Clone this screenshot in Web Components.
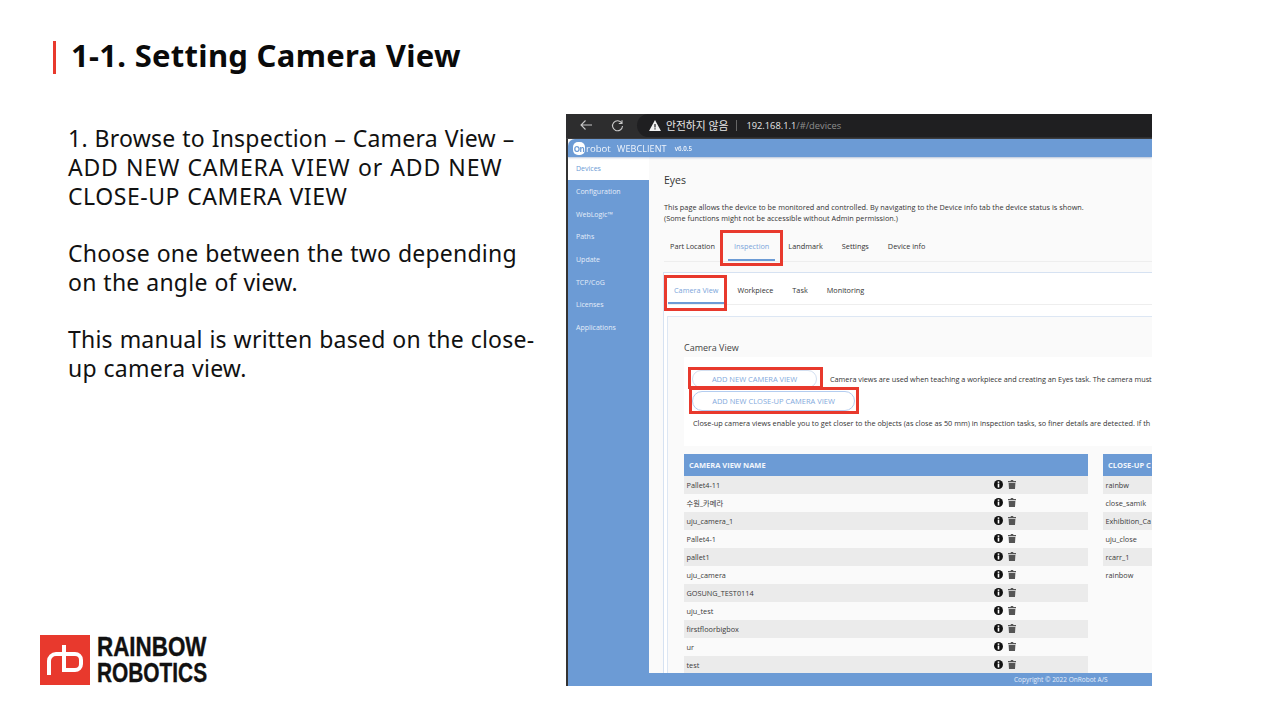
<!DOCTYPE html>
<html lang="en">
<head>
<meta charset="utf-8">
<title>1-1. Setting Camera View</title>
<style>
  html, body { margin: 0; padding: 0; background: #fff; }
</style>
</head>
<body>
<deck-slide>
  <slide-title slot="title">1-1. Setting Camera View</slide-title>
  <slide-notes slot="notes">
    <p>1. Browse to Inspection – Camera View –<br><span style="letter-spacing:.8px">ADD NEW CAMERA VIEW or ADD NEW</span><br><span style="letter-spacing:.55px">CLOSE-UP CAMERA VIEW</span></p>
    <p>Choose one between the two depending<br>on the angle of view.</p>
    <p>This manual is written based on the close-<br>up camera view.</p>
  </slide-notes>
  <rb-logo slot="logo"></rb-logo>
  <web-shot slot="shot"></web-shot>
</deck-slide>

<script>
const uiFont = '"Open Sans", "Noto Sans", "Noto Sans CJK KR", sans-serif';

class DeckSlide extends HTMLElement {
  constructor() {
    super();
    this.attachShadow({mode: 'open'});
    this.shadowRoot.innerHTML = `
      <style>
        :host { display: grid; grid-template-rows: 114px 572px; grid-template-columns: 526px 586px;
          width: 1280px; height: 720px; padding-left: 40px; box-sizing: border-box; overflow: hidden; }
        .head { grid-column: 1 / 3; padding: 41px 0 0 13px; }
        .left { display: flex; flex-direction: column; justify-content: space-between; padding-bottom: 1px; }
      </style>
      <div class="head"><slot name="title"></slot></div>
      <div class="left"><slot name="notes"></slot><slot name="logo"></slot></div>
      <slot name="shot"></slot>
    `;
  }
}

class SlideTitle extends HTMLElement {
  constructor() {
    super();
    this.attachShadow({mode: 'open'});
    this.shadowRoot.innerHTML = `
      <style>
        :host { display: block; height: 33px; border-left: 3px solid #e8392d; padding-left: 15px;
          font: 700 31px/29px "Noto Sans", sans-serif; color: #0a0a0a; letter-spacing: 0.3px; white-space: nowrap; }
      </style>
      <slot></slot>
    `;
  }
}

class SlideNotes extends HTMLElement {
  constructor() {
    super();
    this.attachShadow({mode: 'open'});
    this.shadowRoot.innerHTML = `
      <style>
        :host { display: block; padding: 10px 0 0 28px; font: 400 23px/29px "Noto Sans", sans-serif; color: #111;
          letter-spacing: .22px; word-spacing: .6px; white-space: nowrap; }
        ::slotted(p) { margin: 0 0 28px; }
      </style>
      <slot></slot>
    `;
  }
}

class RbLogo extends HTMLElement {
  constructor() {
    super();
    this.attachShadow({mode: 'open'});
    this.shadowRoot.innerHTML = `
      <style>
        :host { display: flex; align-items: center; gap: 7px; height: 51px; }
        svg { display: block; flex: none; }
        .word { font: 700 28px/26px "Liberation Sans", sans-serif; color: #111; white-space: nowrap; -webkit-text-stroke: .4px #111; }
        .word span { display: block; width: 110px; height: 26px; transform-origin: 0 50%; }
        .a { transform: scaleX(.8); }
        .b { transform: scaleX(.745); }
      </style>
      <svg width="50" height="50" viewBox="0 0 50 50">
        <rect width="50" height="50" fill="#e8392d"/>
        <path d="M9 40V26a7 7 0 0 1 7-7h8V10M24 19v16h11a6 6 0 0 0 6-6v-4a6 6 0 0 0-6-6H24" fill="none" stroke="#fff" stroke-width="4"/>
      </svg>
      <div class="word"><span class="a">RAINBOW</span><span class="b">ROBOTICS</span></div>
    `;
  }
}

class BrowserBar extends HTMLElement {
  constructor() {
    super();
    this.attachShadow({mode: 'open'});
    this.shadowRoot.innerHTML = `
      <style>
        :host { display: flex; align-items: center; height: 25px; padding-bottom: 2px; box-sizing: border-box; background: #2d2d2e;
          border-bottom: 1px solid #3c3c3e; font: 400 9.300px ${uiFont}; color: #e6e6e6; flex: none; }
        svg { display: block; flex: none; }
        .back { margin-left: 13px; }
        .reload { margin-left: 18px; }
        .pill { display: flex; align-items: center; flex: 1; height: 23px; margin-left: 13px; padding-left: 12px;
          background: #1f1f21; border-radius: 12px 0 0 12px; }
        .warn { margin-right: 5px; }
        .ko { font-size: 10.800px; }
        .sep { width: 1px; height: 11px; background: #666; margin: 0 9px 0 8px; }
        .dim { color: #8f8f8f; }
      </style>
      <svg class="back" width="14" height="12" viewBox="0 0 14 12"><path d="M13 6H2M6.500 1.500L2 6l4.500 4.500" fill="none" stroke="#c8c8c8" stroke-width="1.100"/></svg>
      <svg class="reload" width="13" height="13" viewBox="0 0 13 13"><path d="M10.800 4.200A5 5 0 1 0 11.500 7M11 1.300v3.200H7.800" fill="none" stroke="#c8c8c8" stroke-width="1.100"/></svg>
      <div class="pill">
        <svg class="warn" width="12" height="11" viewBox="0 0 12 11"><path d="M6 0L12 11H0z" fill="#f2f2f2"/><path d="M6 4v3.500M6 8.300v1.300" stroke="#1f1f21" stroke-width="1.200"/></svg>
        <span class="ko">안전하지 않음</span><span class="sep"></span><span>192.168.1.1<span class="dim">/#/devices</span></span>
      </div>
    `;
  }
}

class AppHeader extends HTMLElement {
  constructor() {
    super();
    this.attachShadow({mode: 'open'});
    this.shadowRoot.innerHTML = `
      <style>
        :host { display: flex; align-items: center; height: 18px; background: #6c9bd5; border-radius: 7px 0 0 0; color: #eef4fc;
          font: 400 9px ${uiFont}; white-space: nowrap; flex: none; box-shadow: 0 1px 2px rgba(90,120,170,.4); position: relative; }
        .mark { display: flex; align-items: center; justify-content: center; width: 12px; height: 13px; margin-left: 5px;
          background: #fff; border-radius: 5px; color: #6c9bd5; font-size: 8px; font-weight: 700; letter-spacing: -0.5px; }
        .robot { margin-left: 1px; width: 24px; font-size: 9.600px; }
        .name { margin-left: 7px; font-size: 9px; letter-spacing: .1px; }
        .ver { margin-left: 8px; font-size: 6.200px; font-weight: 600; }
      </style>
      <span class="mark">On</span><span class="robot">robot</span><span class="name">WEBCLIENT</span><span class="ver">v6.0.5</span>
    `;
  }
}

class SideNav extends HTMLElement {
  constructor() {
    super();
    this.attachShadow({mode: 'open'});
    const items = ['Devices', 'Configuration', 'WebLogic™', 'Paths', 'Update', 'TCP/CoG', 'Licenses', 'Applications'];
    this.shadowRoot.innerHTML = `
      <style>
        :host { display: block; width: 81px; flex: none; background: #6c9bd5; font: 500 7px ${uiFont}; color: #e4edf9; }
        div { display: flex; align-items: center; height: 22.700px; padding-left: 8px; }
        .on { background: #fff; color: #6c9bd5; height: 23px; }
      </style>
      ${items.map((t, i) => `<div class="${i === 0 ? 'on' : ''}">${t}</div>`).join('')}
    `;
  }
}

class TabBar extends HTMLElement {
  constructor() {
    super();
    this.attachShadow({mode: 'open'});
    this.shadowRoot.innerHTML = `
      <style>
        :host { display: flex; gap: 7px; align-items: flex-start; height: 29px; box-sizing: border-box;
          border-bottom: 1px solid #eeeeee; font: 400 7.300px ${uiFont}; color: #333; white-space: nowrap; }
      </style>
      <slot></slot>
    `;
  }
}

class TabItem extends HTMLElement {
  constructor() {
    super();
    this.attachShadow({mode: 'open'});
    this.shadowRoot.innerHTML = `
      <style>
        :host { display: flex; align-items: center; padding: 0 6px; height: 28px; box-sizing: border-box; border-bottom: 2px solid transparent; }
        :host([selected]) { color: #7ba5da; border-bottom-color: #6c9bd5; }
      </style>
      <slot></slot>
    `;
  }
}

class ViewTable extends HTMLElement {
  constructor() {
    super();
    this.attachShadow({mode: 'open'});
    const rows = (this.getAttribute('rows') || '').split('|');
    const icons = this.hasAttribute('icons');
    const info = `<svg width="9" height="9" viewBox="0 0 9 9"><circle cx="4.500" cy="4.500" r="4.500" fill="#111"/><rect x="3.700" y="1.400" width="1.600" height="1.500" fill="#fff"/><rect x="3.700" y="3.600" width="1.600" height="3.900" fill="#fff"/></svg>`;
    const trash = `<svg width="8" height="9" viewBox="0 0 8 9"><path d="M0 1h2.500l.5-1h2l.5 1H8v1.300H0zM.6 3h6.800L7 9H1z" fill="#555"/></svg>`;
    this.shadowRoot.innerHTML = `
      <style>
        :host { display: block; flex: none; font: 400 7.300px ${uiFont}; color: #3a3a3a; white-space: nowrap; overflow: hidden; }
        .th { height: 22px; display: flex; align-items: center; padding-left: 5px; background: #6c9bd5; color: #f2f6fc; font-weight: 700; font-size: 7.500px; }
        .tr { display: flex; align-items: center; height: 18px; padding-left: 2.500px; background: #fafafa; }
        .tr:nth-child(odd) { background: #ebebeb; }
        .name { flex: 1; }
        .ic { display: flex; gap: 5px; width: 94px; padding-bottom: 2px; flex: none; }
        svg { display: block; }
      </style>
      <div class="th">${this.getAttribute('heading')}</div>
      ${rows.map(r => `<div class="tr"><span class="name">${r}</span>${icons ? `<span class="ic">${info}${trash}</span>` : ''}</div>`).join('')}
    `;
  }
}

class WebShot extends HTMLElement {
  constructor() {
    super();
    this.attachShadow({mode: 'open'});
    this.shadowRoot.innerHTML = `
      <style>
        :host { display: block; position: relative; width: 586px; height: 572px; overflow: hidden; background: #333; }
        .blur { display: flex; flex-direction: column; height: 100%; filter: blur(.35px); }
        .app { display: flex; flex-direction: column; flex: 1; min-height: 0; margin-left: 2px; background: #fafafa; }
        .mid { display: flex; flex: 1; min-height: 0; }
        .main { flex: 1; min-width: 0; padding: 16px 0 0 15px; font: 400 7.300px/11px ${uiFont}; color: #333; overflow: hidden; }
        h1 { margin: 0; font: 400 10.500px/14px ${uiFont}; color: #333; }
        .intro { margin: 15px 0 9px; letter-spacing: .025px; }
        .outer { margin: 10px 0 0 -1px; padding-left: 4px; background: #fff; border-top: 1px solid #d6e2f2; border-left: 1px solid #d6e2f2; }
        .sub { height: 32px; }
        .sub tab-item { height: 31px; padding-top: 5px; }
        .inner { margin: 11px 0 0 -1px; padding: 24px 0 0 16px; background: #fafafa; border-top: 1px solid #dde7f4; border-left: 1px solid #dde7f4; }
        h2 { margin: 0; font: 400 9px/13px ${uiFont}; color: #444; }
        .card { display: flex; flex-direction: column; height: 89px; margin-top: 3px; padding: 13px 0 0 8px; box-sizing: border-box; background: #fff; white-space: nowrap; }
        .line { display: flex; align-items: center; gap: 13px; letter-spacing: -.02px; }
        .pill { display: flex; flex: none; align-items: center; justify-content: center; height: 18px; border: 1px solid #d3dff0; border-radius: 10px; box-sizing: border-box; color: #83a9dc; font-size: 7.500px; }
        .first { width: 125px; }
        .second { width: 163px; height: 20px; margin-top: 3px; border: 1.500px solid #b4cdf0; }
        .note { margin: 7px 0 0 1px; }
        .tables { display: flex; gap: 15px; margin-top: 8px; }
        footer { display: flex; align-items: center; height: 13px; flex: none; padding-left: 446px; background: #6c9bd5; color: #e4edf9; font: 400 6.500px ${uiFont}; position: relative; }
        .mark { position: absolute; border: 3px solid #e8392d; box-sizing: border-box; }
      </style>
      <div class="blur">
        <browser-bar></browser-bar>
        <div class="app">
          <app-header></app-header>
          <div class="mid">
            <side-nav></side-nav>
            <div class="main">
              <h1>Eyes</h1>
              <div class="intro">This page allows the device to be monitored and controlled. By navigating to the Device info tab the device status is shown.<br>(Some functions might not be accessible without Admin permission.)</div>
              <tab-bar>
                <tab-item>Part Location</tab-item><tab-item selected>Inspection</tab-item><tab-item>Landmark</tab-item><tab-item>Settings</tab-item><tab-item>Device info</tab-item>
              </tab-bar>
              <div class="outer">
                <tab-bar class="sub">
                  <tab-item selected>Camera View</tab-item><tab-item>Workpiece</tab-item><tab-item>Task</tab-item><tab-item>Monitoring</tab-item>
                </tab-bar>
                <div class="inner">
                  <h2>Camera View</h2>
                  <div class="card">
                    <div class="line"><span class="pill first">ADD NEW CAMERA VIEW</span><span>Camera views are used when teaching a workpiece and creating an Eyes task. The camera must</span></div>
                    <span class="pill second">ADD NEW CLOSE-UP CAMERA VIEW</span>
                    <div class="note">Close-up camera views enable you to get closer to the objects (as close as 50 mm) in inspection tasks, so finer details are detected. If th</div>
                  </div>
                  <div class="tables">
                    <view-table style="width:404px" icons heading="CAMERA VIEW NAME" rows="Pallet4-11|수원_카메라|uju_camera_1|Pallet4-1|pallet1|uju_camera|GOSUNG_TEST0114|uju_test|firstfloorbigbox|ur|test"></view-table>
                    <view-table style="width:49px" heading="CLOSE-UP C" rows="rainbw|close_samik|Exhibition_Ca|uju_close|rcarr_1|rainbow"></view-table>
                  </div>
                </div>
              </div>
            </div>
          </div>
          <footer>Copyright © 2022 OnRobot A/S</footer>
        </div>
      </div>
      <span class="mark" style="left:154px;top:116px;width:63px;height:36px"></span>
      <span class="mark" style="left:98px;top:161px;width:63px;height:36px"></span>
      <span class="mark" style="left:122px;top:253px;width:135px;height:22px"></span>
      <span class="mark" style="left:123px;top:273px;width:170px;height:27px"></span>
    `;
  }
}

customElements.define('deck-slide', DeckSlide);
customElements.define('slide-title', SlideTitle);
customElements.define('slide-notes', SlideNotes);
customElements.define('rb-logo', RbLogo);
customElements.define('browser-bar', BrowserBar);
customElements.define('app-header', AppHeader);
customElements.define('side-nav', SideNav);
customElements.define('tab-bar', TabBar);
customElements.define('tab-item', TabItem);
customElements.define('view-table', ViewTable);
customElements.define('web-shot', WebShot);
</script>
</body>
</html>
